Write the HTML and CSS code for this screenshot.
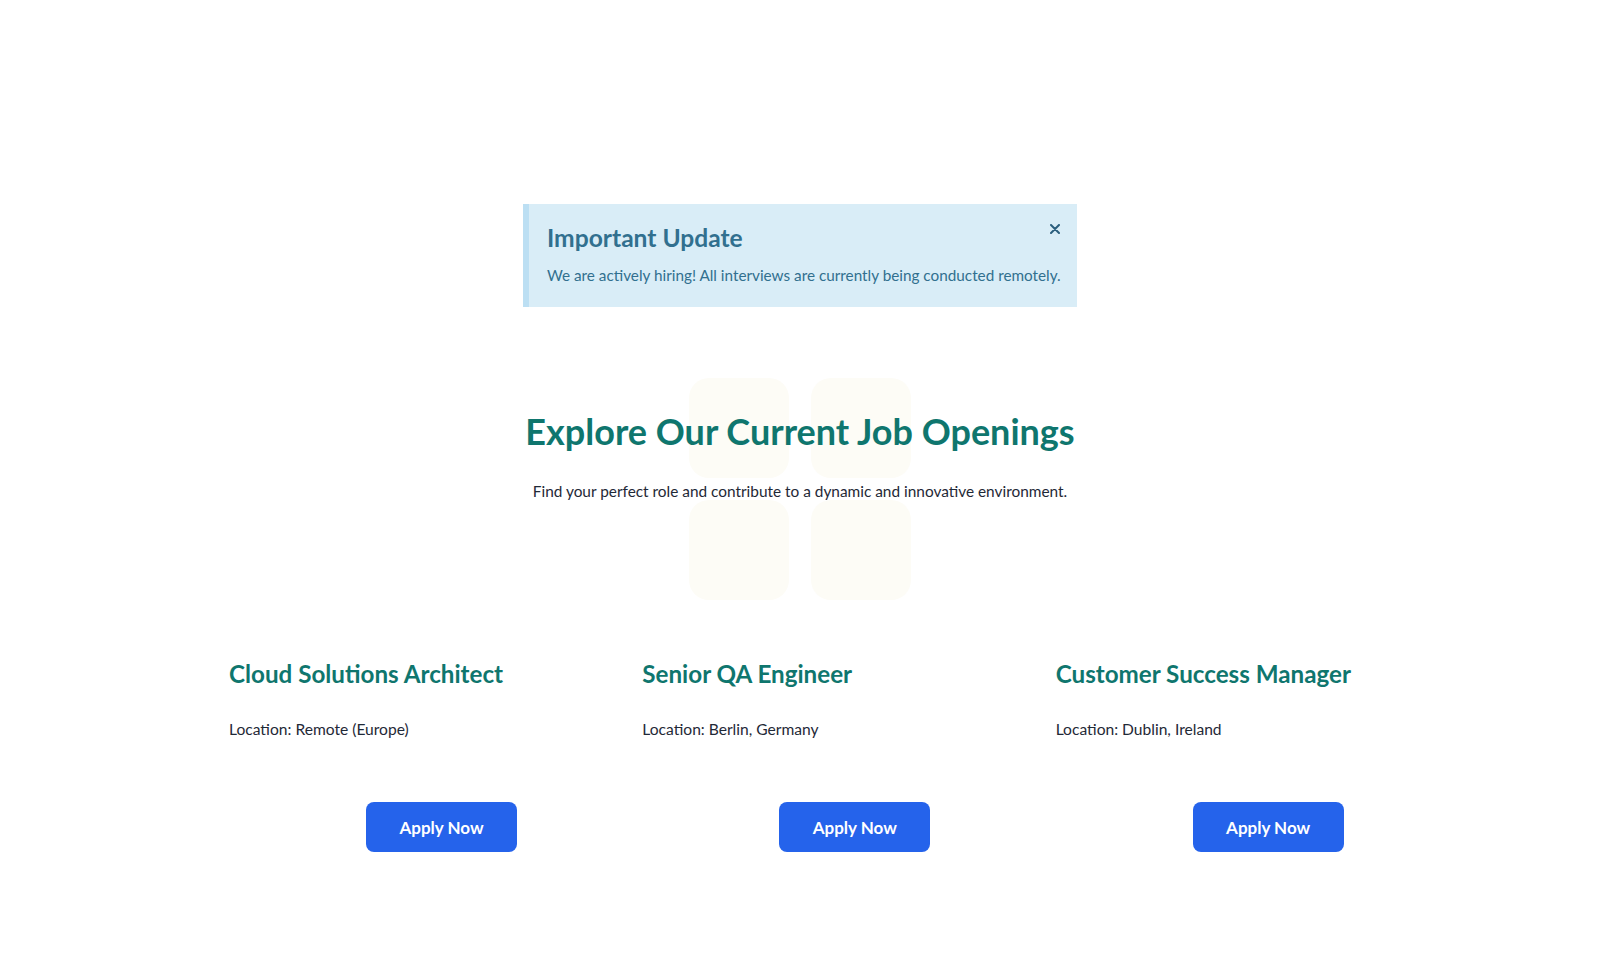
FILE: index.html
```html
<!DOCTYPE html>
<html lang="en">
<head>
<meta charset="utf-8">
<title>Careers</title>
<link rel="stylesheet" href="styles.css">
</head>
<body>
<main class="page">
  <div class="alert" role="alert">
    <h2 class="alert-title">Important Update</h2>
    <p class="alert-text">We are actively hiring! All interviews are currently being conducted remotely.</p>
    <button class="alert-close" aria-label="Close">
      <svg width="10" height="10" viewBox="0 0 10 10"><path d="M1 1L9 9M9 1L1 9" stroke="currentColor" stroke-width="2" stroke-linecap="round"/></svg>
    </button>
  </div>

  <section class="hero">
    <div class="hero-deco" aria-hidden="true">
      <span></span><span></span><span></span><span></span>
    </div>
    <h1 class="hero-title">Explore Our Current Job Openings</h1>
    <p class="hero-sub">Find your perfect role and contribute to a dynamic and innovative environment.</p>
  </section>

  <section class="jobs">
    <article class="job">
      <h3 class="job-title">Cloud Solutions Architect</h3>
      <p class="job-loc">Location: Remote (Europe)</p>
      <a class="btn" href="#">Apply Now</a>
    </article>
    <article class="job">
      <h3 class="job-title">Senior QA Engineer</h3>
      <p class="job-loc">Location: Berlin, Germany</p>
      <a class="btn" href="#">Apply Now</a>
    </article>
    <article class="job">
      <h3 class="job-title">Customer Success Manager</h3>
      <p class="job-loc">Location: Dublin, Ireland</p>
      <a class="btn" href="#">Apply Now</a>
    </article>
  </section>
</main>
</body>
</html>
```

FILE: styles.css
```css
* { box-sizing: border-box; }
html, body { margin: 0; padding: 0; background: #ffffff; }
body {
  font-family: "Lato", "Liberation Sans", sans-serif;
  color: #1f2937;
}
.page {
  padding-top: 204px;
}

.alert {
  position: relative;
  width: 554px;
  margin: 0 auto;
  background: #d9edf7;
  border-left: 6px solid #bcdff3;
  padding: 20px 12px 21px 18px;
  color: #31708f;
}
.alert-title {
  margin: 0 0 12px;
  font-size: 24.6px;
  line-height: 28px;
  font-weight: 700;
}
.alert-text {
  margin: 0;
  font-size: 15.3px;
  line-height: 22px;
  white-space: nowrap;
}
.alert-close {
  position: absolute;
  top: 15px;
  right: 12px;
  width: 20px;
  height: 20px;
  padding: 0;
  border: 0;
  background: transparent;
  color: #2b5f7e;
  display: flex;
  align-items: center;
  justify-content: center;
  cursor: pointer;
}

.hero {
  position: relative;
  margin-top: 71px;
  height: 222px;
  display: flex;
  flex-direction: column;
  align-items: center;
  padding-top: 32px;
}
.hero-deco {
  position: absolute;
  top: 0;
  left: 50%;
  transform: translateX(-50%);
  display: grid;
  grid-template-columns: 100px 100px;
  grid-auto-rows: 100px;
  gap: 22px;
  z-index: 0;
}
.hero-deco span {
  background: #fdfcf6;
  border-radius: 20px;
}
.hero-title {
  position: relative;
  margin: 0;
  font-size: 36px;
  line-height: 42px;
  font-weight: 700;
  color: #0f766e;
}
.hero-sub {
  position: relative;
  margin: 27px 0 0;
  font-size: 15.4px;
  line-height: 24px;
  color: #1f2937;
}

.jobs {
  width: 1200px;
  margin: 59px auto 0;
  display: grid;
  grid-template-columns: repeat(3, 1fr);
  gap: 40px;
}
.job {
  display: flex;
  flex-direction: column;
  padding-left: 29px;
}
.job-title {
  margin: 0;
  font-size: 24.2px;
  line-height: 30px;
  font-weight: 700;
  color: #0f766e;
}
.job-loc {
  margin: 28px 0 0;
  font-size: 15.6px;
  line-height: 24px;
  color: #1f2937;
}
.btn {
  align-self: flex-start;
  margin: 61px 0 0 137px;
  width: 151px;
  height: 50px;
  border-radius: 8px;
  background: #2563eb;
  color: #ffffff;
  font-size: 17px;
  font-weight: 700;
  text-decoration: none;
  display: flex;
  align-items: center;
  justify-content: center;
}
```
